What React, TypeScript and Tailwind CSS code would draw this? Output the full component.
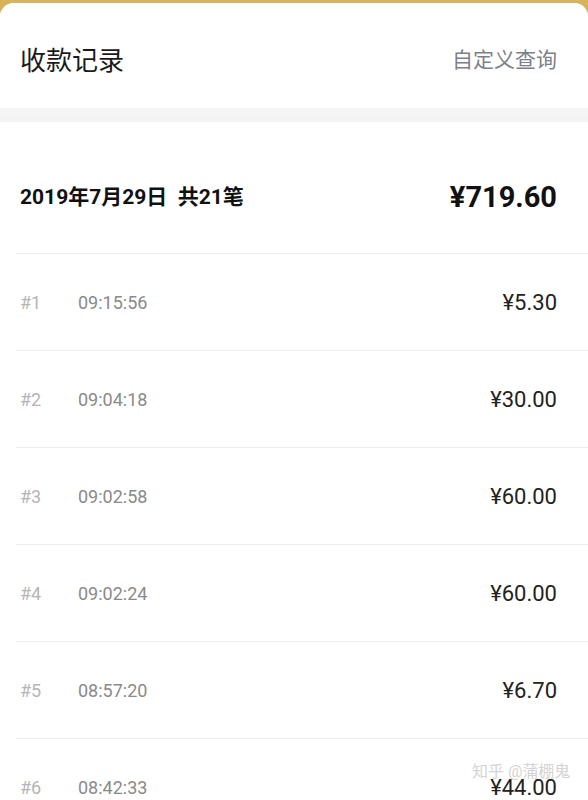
const records = [
  { no: 1, time: "09:15:56", amount: "¥5.30" },
  { no: 2, time: "09:04:18", amount: "¥30.00" },
  { no: 3, time: "09:02:58", amount: "¥60.00" },
  { no: 4, time: "09:02:24", amount: "¥60.00" },
  { no: 5, time: "08:57:20", amount: "¥6.70" },
  { no: 6, time: "08:42:33", amount: "¥44.00" },
];

export default function App() {
  return (
    <div
      className="relative h-[800px] w-[588px] overflow-hidden bg-[#d8b35a] pt-[3px]"
      style={{ fontFamily: 'Roboto, "Noto Sans CJK SC", sans-serif' }}
    >
      <div className="h-full rounded-t-[14px] bg-[#f5f5f5]">
        <header className="flex h-[105px] items-center justify-between rounded-t-[14px] bg-white px-5 pt-[10px]">
          <h1 className="text-[26px] leading-none text-[#1a1a1a]">收款记录</h1>
          <span className="mr-[11px] text-[21px] leading-none text-[#7b808b]">自定义查询</span>
        </header>
        <div className="h-[14px] bg-gradient-to-b from-[#f6f6f6] to-[#f3f3f3]" />
        <section className="bg-white">
          <div className="flex h-[131px] items-start justify-between px-5 pt-[60px]">
            <span className="text-[21px] font-bold leading-[30px] text-[#111]">2019年7月29日&nbsp;&nbsp;共21笔</span>
            <span className="mr-[11px] text-[29px] font-bold leading-[30px] text-[#111]">¥719.60</span>
          </div>
          {records.map((r) => (
            <div key={r.no} className="ml-4 border-t border-[#ececec]">
              <div className="flex h-[96px] items-center pl-1 pr-[31px]">
                <span className="w-[58px] text-[18px] text-[#b5b5b5]">#{r.no}</span>
                <span className="text-[18px] text-[#8a8a8a]">{r.time}</span>
                <span className="ml-auto text-[22px] text-[#222]">{r.amount}</span>
              </div>
            </div>
          ))}
        </section>
      </div>
      <div className="absolute left-[472px] top-[764px] whitespace-nowrap text-[16px] leading-none text-[#c8c8c8]/80">知乎 @蒲棚鬼</div>
    </div>
  );
}
